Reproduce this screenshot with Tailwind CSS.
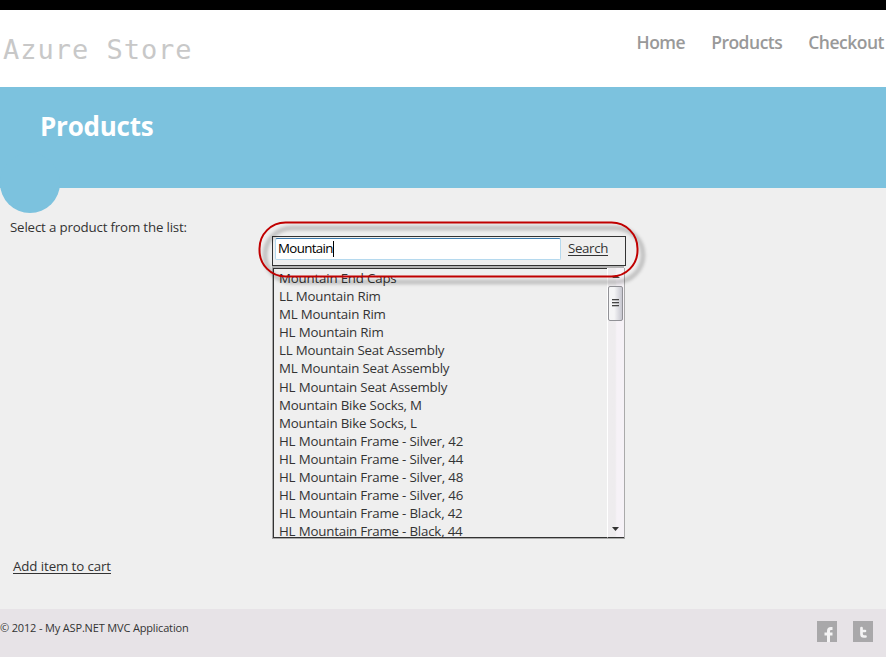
<!DOCTYPE html>
<html lang="en">
<head>
<meta charset="utf-8">
<title>Products - Azure Store</title>
<script src="https://cdn.jsdelivr.net/npm/@tailwindcss/browser@4"></script>
</head>
<body class="relative flex h-[657px] w-[886px] flex-col overflow-hidden bg-[#efefef] font-['Open_Sans','Noto_Sans',sans-serif] text-[13.3px] text-[#333]">
  <header class="flex h-[87px] shrink-0 items-start justify-between border-t-[10px] border-black bg-white pl-[3px] pr-[2px]">
    <a class="mt-[20px] whitespace-nowrap font-['DejaVu_Sans_Mono',monospace] text-[27px] leading-[40px] tracking-[0.98px] text-[#c8c8c8]">Azure Store</a>
    <nav class="mt-[19px] flex gap-[26px] whitespace-nowrap text-[17.5px] font-semibold leading-[26px] text-[#999]">
      <a class="tracking-[-0.5px]">Home</a><a class="tracking-[-0.5px]">Products</a><a class="tracking-[-0.5px]">Checkout</a>
    </nav>
  </header>
  <section class="relative h-[101px] shrink-0 bg-[#7cc2de] pl-[40px] pt-[20px]">
    <h1 class="text-[26px] font-bold leading-[38px] tracking-[-0.25px] text-white">Products</h1>
    <div class="absolute left-0 top-[66px] h-[60px] w-[60px] rounded-full bg-[#7cc2de]"></div>
  </section>
  <main class="flex h-[421px] shrink-0 flex-col">
    <div class="flex h-[368px] items-start">
      <p class="ml-[10px] mt-[30px] w-[262px] whitespace-nowrap leading-[18px] tracking-[-0.17px]">Select a product from the list:</p>
      <div class="mt-[48px] w-[354px]">
        <div class="flex h-[30px] items-start border border-[#333] pl-[2px] pt-px">
          <div class="flex h-[22px] w-[286px] items-center rounded-[2px] border border-[#b5d9ee] border-t-[#3d7bad] bg-white pl-[2px] text-black"><span class="tracking-[-0.65px]">Mountain</span><i class="h-[16px] w-px bg-black"></i></div>
          <a class="ml-[7px] mt-px leading-[18px] tracking-[-0.35px] underline underline-offset-2">Search</a>
        </div>
        <div class="h-[2px] w-[352px] bg-[#b4b4b4]"></div>
        <div class="flex h-[271px] w-[353px] overflow-hidden border-b border-l border-r border-b-[#aaa] border-l-[#aaa] border-r-[#aaa]">
          <div class="h-[270px] w-[334px] shrink-0 overflow-hidden border-b border-l border-t border-[#333] pl-[5px]">
            <ul class="whitespace-nowrap leading-[18.09px] tracking-[-0.19px]">
              <li>Mountain End Caps</li><li>LL Mountain Rim</li><li>ML Mountain Rim</li><li>HL Mountain Rim</li><li>LL Mountain Seat Assembly</li><li>ML Mountain Seat Assembly</li><li>HL Mountain Seat Assembly</li><li>Mountain Bike Socks, M</li><li>Mountain Bike Socks, L</li><li>HL Mountain Frame - Silver, 42</li><li>HL Mountain Frame - Silver, 44</li><li>HL Mountain Frame - Silver, 48</li><li>HL Mountain Frame - Silver, 46</li><li>HL Mountain Frame - Black, 42</li><li>HL Mountain Frame - Black, 44</li>
            </ul>
          </div>
          <div class="flex h-[270px] w-[17px] flex-col items-start border-b border-l border-b-[#333] border-l-white bg-linear-to-r from-[#eeecee] from-45% to-[#f6f2f7] to-55%">
            <svg class="ml-[4px] mt-[7px] shrink-0" width="8" height="3"><path d="M0 3L4 0L8 3Z" fill="#444"/></svg>
            <div class="mt-[8px] flex h-[35px] w-[15px] shrink-0 flex-col items-center justify-center rounded-[2px] border border-[#919196] bg-linear-to-r from-[#f5f5f6] from-40% to-[#c6c6cf]">
              <svg class="mb-px" width="7" height="8"><path d="M0 .5H7M0 3.500H7M0 6.500H7" stroke="#444"/><path d="M0 1.500H7M0 4.500H7M0 7.500H7" stroke="#999" stroke-opacity=".6"/></svg>
            </div>
            <svg class="mb-[6px] ml-[4px] mt-auto shrink-0" width="7" height="4"><path d="M0 0H7L3.500 4Z" fill="#333"/></svg>
          </div>
        </div>
      </div>
    </div>
    <a class="ml-[13px] mt-px self-start leading-[18px] tracking-[-0.1px] underline underline-offset-2">Add item to cart</a>
  </main>
  <footer class="flex h-[48px] shrink-0 items-start justify-between bg-[#e7e3e7] pr-[13px]">
    <p class="mt-[11px] whitespace-nowrap text-[11px] leading-[16px] tracking-[-0.16px]">© 2012 - My ASP.NET MVC Application</p>
    <div class="mt-[12px] flex gap-[16px]">
      <svg width="20" height="21"><rect width="20" height="21" fill="#a9a8aa"/><path d="M15.500 7.500H14Q11.500 7.500 11.500 10V21M7.500 13H15.500" fill="none" stroke="#f4f3f4" stroke-width="3"/></svg>
      <svg width="20" height="21"><rect width="20" height="21" fill="#a9a8aa"/><path d="M8.500 7V13Q8.500 15.500 11 15.500H12.500M8.500 10H12" fill="none" stroke="#f4f3f4" stroke-width="2.700" stroke-linecap="round"/></svg>
    </div>
  </footer>
  <svg class="pointer-events-none absolute left-[250px] top-[210px]" width="410" height="85" fill="none">
    <defs><filter id="soft" x="-5%" y="-20%" width="110%" height="150%"><feGaussianBlur stdDeviation="1.500"/></filter></defs>
    <rect x="15" y="18" width="378" height="54" rx="27" stroke="#000" stroke-opacity=".18" stroke-width="5" filter="url(#soft)"/>
    <rect x="9.500" y="12.500" width="378" height="54" rx="26" stroke="#c00000" stroke-width="2"/>
  </svg>
</body>
</html>
